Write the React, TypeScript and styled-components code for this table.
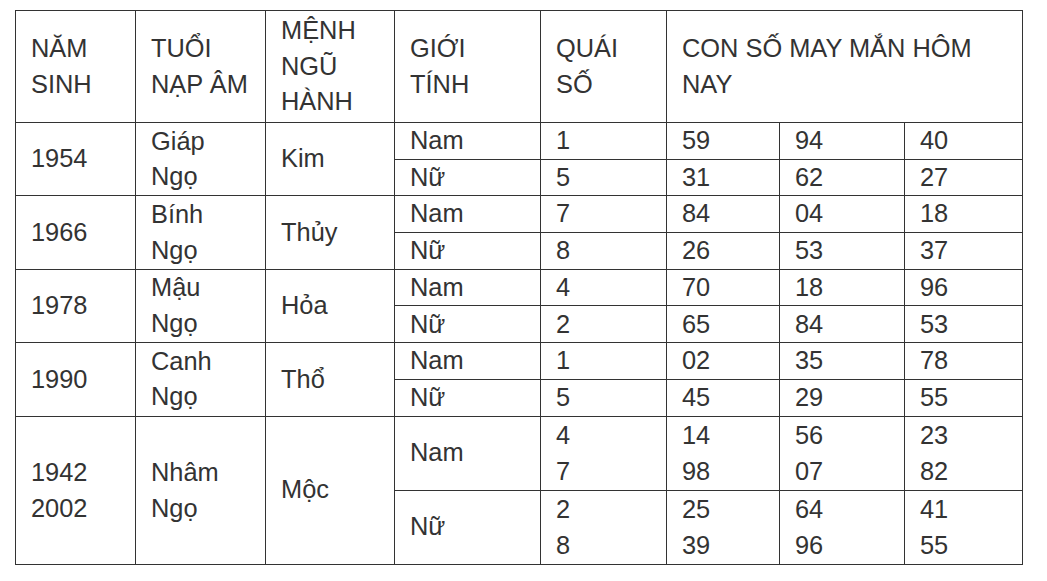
import React from "react";
import styled, { createGlobalStyle } from "styled-components";

const Global = createGlobalStyle`
  html, body { margin: 0; padding: 0; background: #fff; }
  body { font-family: "Liberation Sans", Arial, sans-serif; color: #333; }
`;

const Page = styled.div`
  padding: 10px 0 0 15px;
`;

const Table = styled.table`
  border-collapse: collapse;
  table-layout: fixed;
  width: 1007px;
  font-size: 25.4px;
  line-height: 35.5px;
  color: #333;
`;

const Row = styled.tr<{ $h: number }>`
  height: ${(p) => p.$h}px;
`;

const HeadCell = styled.th`
  border: 1px solid #333;
  padding: 0 15px;
  text-align: left;
  font-weight: normal;
  vertical-align: middle;
  white-space: nowrap;
`;

const Cell = styled.td<{ $tall?: boolean }>`
  border: 1px solid #333;
  padding: 0 15px;
  text-align: left;
  vertical-align: middle;
  white-space: nowrap;
  line-height: ${(p) => (p.$tall ? "36.5px" : "35.5px")};
`;

const widths = [120, 130, 129, 146, 126, 113, 125, 118];

type Sub = { gender: string; qs: string[]; nums: string[][] };
type Group = { years: string[]; tuoi: string[]; menh: string; subs: Sub[]; tall?: boolean };

const groups: Group[] = [
  {
    years: ["1954"],
    tuoi: ["Giáp", "Ngọ"],
    menh: "Kim",
    subs: [
      { gender: "Nam", qs: ["1"], nums: [["59"], ["94"], ["40"]] },
      { gender: "Nữ", qs: ["5"], nums: [["31"], ["62"], ["27"]] },
    ],
  },
  {
    years: ["1966"],
    tuoi: ["Bính", "Ngọ"],
    menh: "Thủy",
    subs: [
      { gender: "Nam", qs: ["7"], nums: [["84"], ["04"], ["18"]] },
      { gender: "Nữ", qs: ["8"], nums: [["26"], ["53"], ["37"]] },
    ],
  },
  {
    years: ["1978"],
    tuoi: ["Mậu", "Ngọ"],
    menh: "Hỏa",
    subs: [
      { gender: "Nam", qs: ["4"], nums: [["70"], ["18"], ["96"]] },
      { gender: "Nữ", qs: ["2"], nums: [["65"], ["84"], ["53"]] },
    ],
  },
  {
    years: ["1990"],
    tuoi: ["Canh", "Ngọ"],
    menh: "Thổ",
    subs: [
      { gender: "Nam", qs: ["1"], nums: [["02"], ["35"], ["78"]] },
      { gender: "Nữ", qs: ["5"], nums: [["45"], ["29"], ["55"]] },
    ],
  },
  {
    years: ["1942", "2002"],
    tuoi: ["Nhâm", "Ngọ"],
    menh: "Mộc",
    tall: true,
    subs: [
      { gender: "Nam", qs: ["4", "7"], nums: [["14", "98"], ["56", "07"], ["23", "82"]] },
      { gender: "Nữ", qs: ["2", "8"], nums: [["25", "39"], ["64", "96"], ["41", "55"]] },
    ],
  },
];

const Lines = ({ items }: { items: string[] }) => (
  <>
    {items.map((t, i) => (
      <React.Fragment key={i}>
        {i > 0 && <br />}
        {t}
      </React.Fragment>
    ))}
  </>
);

export default function App() {
  return (
    <>
      <Global />
      <Page>
        <Table>
          <colgroup>
            {widths.map((w, i) => (
              <col key={i} style={{ width: w }} />
            ))}
          </colgroup>
          <thead>
            <Row $h={112}>
              <HeadCell><Lines items={["NĂM", "SINH"]} /></HeadCell>
              <HeadCell><Lines items={["TUỔI", "NẠP ÂM"]} /></HeadCell>
              <HeadCell><Lines items={["MỆNH", "NGŨ", "HÀNH"]} /></HeadCell>
              <HeadCell><Lines items={["GIỚI", "TÍNH"]} /></HeadCell>
              <HeadCell><Lines items={["QUÁI", "SỐ"]} /></HeadCell>
              <HeadCell colSpan={3}><Lines items={["CON SỐ MAY MẮN HÔM", "NAY"]} /></HeadCell>
            </Row>
          </thead>
          <tbody>
            {groups.map((g, gi) =>
              g.subs.map((s, si) => (
                <Row key={`${gi}-${si}`} $h={g.tall ? 74 : 36.7}>
                  {si === 0 && (
                    <>
                      <Cell rowSpan={2} $tall={g.tall}><Lines items={g.years} /></Cell>
                      <Cell rowSpan={2} $tall={g.tall}><Lines items={g.tuoi} /></Cell>
                      <Cell rowSpan={2}>{g.menh}</Cell>
                    </>
                  )}
                  <Cell>{s.gender}</Cell>
                  <Cell $tall={g.tall}><Lines items={s.qs} /></Cell>
                  {s.nums.map((n, ni) => (
                    <Cell key={ni} $tall={g.tall}><Lines items={n} /></Cell>
                  ))}
                </Row>
              ))
            )}
          </tbody>
        </Table>
      </Page>
    </>
  );
}
